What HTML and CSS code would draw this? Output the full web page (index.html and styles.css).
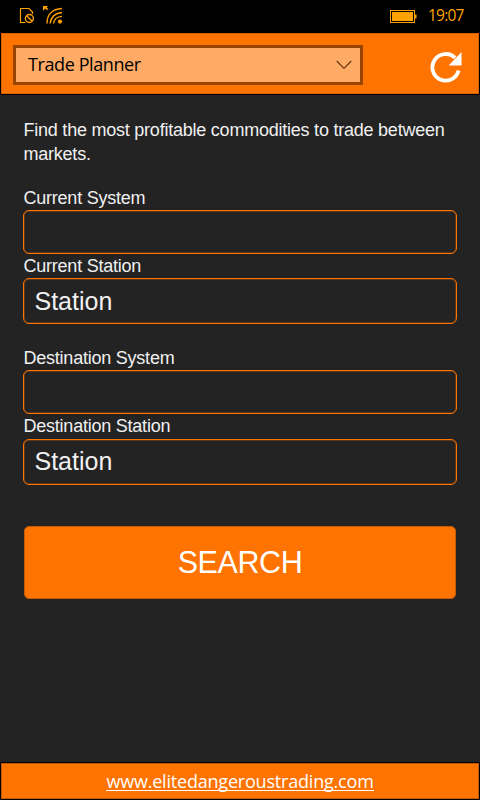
FILE: index.html
```html
<!DOCTYPE html>
<html lang="en">
<head>
<meta charset="utf-8">
<title>Trade Planner</title>
<link rel="stylesheet" href="styles.css">
</head>
<body>
<div class="status">
  <svg class="status-left" width="50" height="24" viewBox="0 0 50 24" fill="none" stroke="#ffa200">
    <path d="M7.500 18.500H2.500V4.500H11L14.500 8V10" stroke-width="1.200"/>
    <circle cx="11.400" cy="14.500" r="4" stroke-width="1.400"/>
    <path d="M8.600 11.700L14.200 17.300" stroke-width="1.400"/>
    <path d="M29 19.500C29 11 34 5 44 4.500M32 19.500C33 13 36.500 9 44 8.500M35.500 19.500C36 15.500 39 12.700 44 12.400" stroke-width="1.400"/>
    <circle cx="42" cy="17.600" r="2.100" fill="#ffa200" stroke="none"/>
    <path d="M25 2H30L28.600 3.400L30.200 5L29 6.200L27.200 4.600L25 7Z" fill="#ffa200" stroke="none"/>
  </svg>
  <svg class="battery" width="28" height="14" viewBox="0 0 28 14">
    <rect x=".5" y=".5" width="24" height="12" fill="none" stroke="#ffa200"/>
    <rect x="2" y="2" width="21" height="9" fill="#ffa200"/>
    <rect x="25" y="4.500" width="1.500" height="4" fill="#ffa200"/>
  </svg>
  <span class="clock">19:07</span>
</div>
<header class="header">
  <div class="select">
    <span class="select-text">Trade Planner</span>
    <svg width="16" height="10" viewBox="0 0 16 10" fill="none" stroke="#5a2c08" stroke-width="1.100"><path d="M.7 1L8 8.300L15.300 1"/></svg>
  </div>
  <svg class="refresh" width="32" height="32" viewBox="0 0 32 32">
    <path d="M25 5.800A13.300 13.300 0 1 0 28.600 18.500" fill="none" stroke="#fff" stroke-width="3.800"/>
    <path d="M31.500 0V13.500H18.500L24 8Z" fill="#fff"/>
  </svg>
</header>
<main class="main">
  <p class="intro">Find the most profitable commodities to trade between markets.</p>
  <div class="group">
    <div class="label">Current System</div>
    <div class="field"></div>
    <div class="label">Current Station</div>
    <div class="field field-select">Station</div>
  </div>
  <div class="group">
    <div class="label">Destination System</div>
    <div class="field"></div>
    <div class="label label-last">Destination Station</div>
    <div class="field field-select">Station</div>
  </div>
  <div class="search">SEARCH</div>
</main>
<footer class="footer"><span class="link">www.elitedangeroustrading.com</span></footer>
</body>
</html>
```
FILE: styles.css
```css
* { box-sizing: border-box; }
body {
  margin: 0;
  width: 480px;
  height: 800px;
  overflow: hidden;
  display: flex;
  flex-direction: column;
  background: #232323;
  color: #f0f0f0;
  font-family: "Liberation Sans", Arial, sans-serif;
}
.status {
  height: 33px;
  flex: none;
  display: flex;
  align-items: flex-start;
  background: #000;
  padding: 4px 16px 0 18px;
}
.battery { margin: 6px 0 0 auto; }
.clock {
  width: 36px;
  margin-left: 10px;
  color: #ffa200;
  font: 15.5px/22px "Open Sans", sans-serif;
  letter-spacing: -0.8px;
  white-space: nowrap;
}
.header {
  height: 62px;
  flex: none;
  display: flex;
  align-items: flex-start;
  justify-content: space-between;
  background: #ff7300;
  border: 1px solid #000;
  border-top: 0;
  padding: 12px 17px 0 12px;
  box-shadow: inset 0 0 0 1px #d96200;
}
.select {
  width: 350px;
  height: 40px;
  display: flex;
  align-items: center;
  justify-content: space-between;
  background: #ffab66;
  border: 3px solid #994500;
  padding: 0 8px 0 12px;
}
.select-text {
  color: #000;
  font: 18px/30px "Open Sans", sans-serif;
  letter-spacing: -0.4px;
  padding-bottom: 2px;
}
.refresh { margin-top: 7px; }
.main { flex: 1; padding: 23px 23px 0; }
.intro, .label {
  font-size: 18px;
  line-height: 24px;
  letter-spacing: -0.23px;
  padding-left: 0.5px;
}
.intro { margin: 0 0 20px; }
.group { margin-bottom: 22px; }
.label-last { margin-bottom: 1px; }
.field {
  height: 44px;
  border: 1px solid #ff7300;
  border-radius: 6px;
  box-shadow: inset 0 0 0 1px rgba(255, 115, 0, 0.25);
  padding-left: 10.5px;
}
.field-select { height: 46px; font-size: 25px; line-height: 45px; }
.label-last + .field-select { line-height: 43px; }
.search {
  height: 73px;
  margin: 41px 1px 0;
  border: 1px solid #c45a06;
  border-radius: 5px;
  background: #ff7300;
  color: #fff;
  font-size: 30.5px;
  letter-spacing: -0.4px;
  line-height: 70px;
  text-align: center;
}
.footer {
  height: 38px;
  flex: none;
  background: #ff7300;
  border: 1px solid #000;
  box-shadow: inset 0 0 0 1px #c45a06;
  text-align: center;
  color: #fff;
  font: 18px/37px "Open Sans", sans-serif;
}
.link {
  display: inline-block;
  height: 28px;
  letter-spacing: -0.2px;
  border-bottom: 1px solid #fff;
}
```
